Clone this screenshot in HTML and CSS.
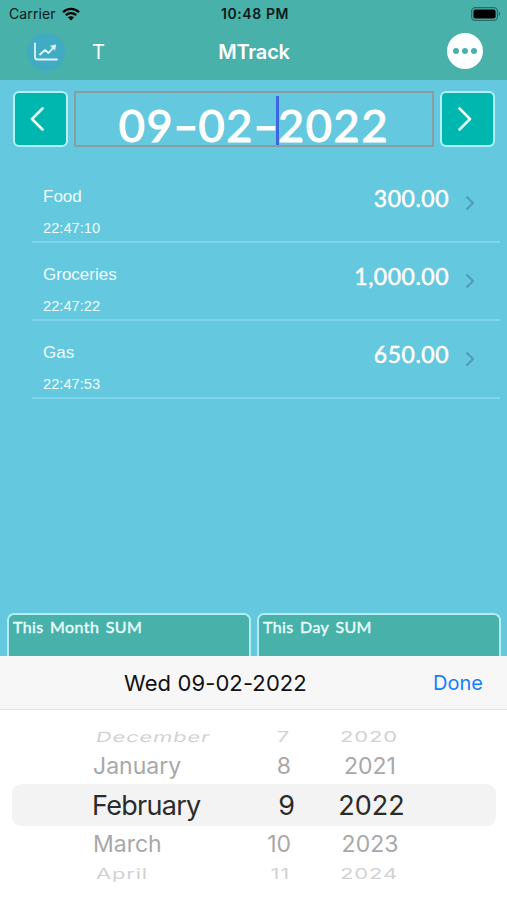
FILE: index.html
```html
<!DOCTYPE html>
<html lang="en">
<head>
  <meta charset="UTF-8" />
  <meta name="viewport" content="width=device-width, initial-scale=1" />
  <title>MTrack</title>
  <link rel="stylesheet" href="styles.css">
</head>
<body>
  <header>
    <div class="status-bar">
      <div class="carrier">
        <span>Carrier</span>
        <svg class="wifi" viewBox="0 0 18 14" width="18" height="14" aria-hidden="true">
          <path d="M1 5.2C5.6.7 12.4.7 17 5.2M3.8 8.2c3-2.900 7.400-2.900 10.400 0" fill="none" stroke="#000" stroke-width="2.300" />
          <path d="M9 13.500 5.900 10.300c1.800-1.500 4.400-1.500 6.200 0z" />
        </svg>
      </div>
      <span class="clock">10:48 PM</span>
      <svg class="battery" viewBox="0 0 30 14" width="30" height="14" aria-hidden="true">
        <rect x=".6" y=".6" width="25.800" height="12.800" rx="3.600" fill="none" stroke="#2c6b66" stroke-width="1.200" />
        <rect x="2.400" y="2.400" width="22.200" height="9.200" rx="2" />
        <path d="M27.600 4.800c1.800.6 1.800 3.800 0 4.400z" fill="#2c6b66" />
      </svg>
    </div>
    <nav class="nav-bar">
      <button class="btn-chart" aria-label="Chart">
        <svg viewBox="0 0 26 20" width="26" height="20" fill="none" stroke="#e2f6fc" stroke-width="1.800" stroke-linecap="round">
          <path d="M2 1.500v13.500q0 2.500 2.500 2.500H24" />
          <path d="m7 12.500 5-4.500 3.500 3L20.500 5.500" stroke-linejoin="round" />
          <path d="m17.800 4 4.900-1.200-.8 5z" fill="#e2f6fc" stroke-width=".6" />
        </svg>
      </button>
      <span class="btn-text">T</span>
      <h1>MTrack</h1>
      <button class="btn-more" aria-label="More"><i></i><i></i><i></i></button>
    </nav>
  </header>

  <main>
    <section class="date-row">
      <button class="btn-arrow prev" aria-label="Previous day">
        <svg viewBox="0 0 14 24" width="14" height="24"><path d="M12.500 1.500 2 12l10.500 10.500" /></svg>
      </button>
      <div class="date-field"><span>09</span><span class="dash">-</span><span>02</span><span class="dash">-</span><i class="caret"></i><span>2022</span></div>
      <button class="btn-arrow next" aria-label="Next day">
        <svg viewBox="0 0 14 24" width="14" height="24"><path d="M1.500 1.500 12 12 1.500 22.500" /></svg>
      </button>
    </section>

    <ul class="entries">
      <li>
        <div class="entry-info"><span class="name">Food</span><span class="time">22:47:10</span></div>
        <span class="amount">300.00</span>
        <svg class="chevron" viewBox="0 0 10 16" width="10" height="16"><path d="m1.500 1.500 6.500 6.500-6.500 6.500" /></svg>
      </li>
      <li>
        <div class="entry-info"><span class="name">Groceries</span><span class="time">22:47:22</span></div>
        <span class="amount">1,000.00</span>
        <svg class="chevron" viewBox="0 0 10 16" width="10" height="16"><path d="m1.500 1.500 6.500 6.500-6.500 6.500" /></svg>
      </li>
      <li>
        <div class="entry-info"><span class="name">Gas</span><span class="time">22:47:53</span></div>
        <span class="amount">650.00</span>
        <svg class="chevron" viewBox="0 0 10 16" width="10" height="16"><path d="m1.500 1.500 6.500 6.500-6.500 6.500" /></svg>
      </li>
    </ul>

    <section class="sums">
      <div class="sum">This Month SUM</div>
      <div class="sum">This Day SUM</div>
    </section>
  </main>

  <!-- Date picker -->
  <div class="toolbar">
    <span class="picked">Wed 09-02-2022</span>
    <button class="btn-done">Done</button>
  </div>
  <div class="picker">
    <div class="wheel far top"><span>December</span><span>7</span><span>2020</span></div>
    <div class="wheel near"><span>January</span><span>8</span><span>2021</span></div>
    <div class="wheel selected"><span>February</span><span>9</span><span>2022</span></div>
    <div class="wheel near"><span>March</span><span>10</span><span>2023</span></div>
    <div class="wheel far"><span>April</span><span>11</span><span>2024</span></div>
  </div>
</body>
</html>
```

FILE: styles.css
```css
* {
  box-sizing: border-box;
}
html, body {
  height: 100%;
  margin: 0;
  overflow: hidden;
}
body {
  display: flex;
  flex-direction: column;
  background: #fff;
  font-family: Inter, "Liberation Sans", sans-serif;
}
button {
  border: none;
  padding: 0;
  font-family: inherit;
}

/* Header */
header {
  height: 80px;
  background: #48b1aa;
}
.status-bar {
  height: 27px;
  padding: 0 6px 0 9px;
  display: grid;
  grid-template-columns: 1fr auto 1fr;
  align-items: center;
  color: #0b1a19;
}
.carrier {
  display: flex;
  align-items: center;
  gap: 6px;
  font-size: 14px;
  letter-spacing: 0.1px;
}
.clock {
  font-size: 14px;
  font-weight: 600;
  letter-spacing: 0.6px;
}
.battery {
  justify-self: end;
}
.nav-bar {
  height: 50px;
  padding: 0 24px 0 27px;
  display: grid;
  grid-template-columns: 38px 1fr auto 1fr 36px;
  align-items: center;
  color: #fff;
}
.btn-chart {
  width: 38px;
  height: 38px;
  border-radius: 50%;
  background: #41abc3;
  display: flex;
  align-items: center;
  justify-content: center;
}
.btn-text {
  padding-left: 27px;
  font-size: 20px;
}
h1 {
  margin: 0 2px 0 -2px;
  font-size: 20px;
  font-weight: 600;
  letter-spacing: -0.2px;
}
.btn-more {
  grid-column: 5;
  width: 36px;
  height: 36px;
  margin-top: -2px;
  border-radius: 50%;
  background: #fff;
  display: flex;
  align-items: center;
  justify-content: center;
  gap: 3px;
}
.btn-more i {
  width: 6px;
  height: 6px;
  border-radius: 50%;
  background: #48b1aa;
}

/* Content */
main {
  height: 576px;
  background: #64c8de;
  display: flex;
  flex-direction: column;
}
.date-row {
  padding: 11px 12px 0 13px;
  display: flex;
  gap: 6px;
  align-items: flex-start;
}
.btn-arrow {
  width: 55px;
  height: 56px;
  border: 2px solid #b5f1f3;
  border-radius: 6px;
  background: #00b7b0;
  display: flex;
  align-items: center;
  justify-content: center;
}
.btn-arrow.prev {
  padding-right: 8px;
}
.btn-arrow.next {
  padding-right: 5px;
}
.btn-arrow path {
  fill: none;
  stroke: #e9fffc;
  stroke-width: 2.6;
  stroke-linecap: round;
  stroke-linejoin: round;
}
.date-field {
  flex: 1;
  height: 56px;
  border: 2px solid #8b9da3;
  display: flex;
  justify-content: center;
  color: #fff;
  font-family: Lato, sans-serif;
  font-size: 45px;
  line-height: 64px;
  letter-spacing: 1.7px;
  -webkit-text-stroke: 1.2px #fff;
  stroke-linejoin: round;
}
.dash {
  width: 24px;
  letter-spacing: 0;
  text-align: center;
  transform: scaleX(1.5);
}
.caret {
  width: 3px;
  height: 49px;
  margin: 3px -1px 0 -2px;
  background: #3b66e0;
}

.entries {
  list-style: none;
  margin: 18px 7px 0 32px;
  padding: 0;
  color: #effcff;
}
.entries li {
  height: 78px;
  padding: 0 25px 0 11px;
  border-bottom: 2px solid #7fd5ea;
  display: flex;
}
.entry-info {
  flex: 1;
  padding-top: 20px;
  display: flex;
  flex-direction: column;
  font-family: "Liberation Sans", sans-serif;
}
.name {
  font-size: 17px;
  line-height: 24px;
}
.time {
  margin-top: 10px;
  font-size: 14.7px;
  line-height: 18px;
}
.amount {
  padding-top: 18px;
  color: #fff;
  font-family: Lato, sans-serif;
  font-size: 23px;
  line-height: 30px;
  letter-spacing: 0.5px;
  -webkit-text-stroke: 0.5px #fff;
  stroke-linejoin: round;
}
.chevron {
  margin: 30px 0 0 16px;
}
.chevron path {
  fill: none;
  stroke: #4e9db3;
  stroke-width: 2;
}

.sums {
  margin-top: auto;
  padding: 0 6px 0 7px;
  display: flex;
  gap: 6px;
}
.sum {
  flex: 1;
  height: 43px;
  padding: 2px 4px;
  border: 2px solid #b4edf0;
  border-bottom: none;
  border-radius: 7px 7px 0 0;
  background: #48b1aa;
  color: #eafffd;
  font-family: Lato, sans-serif;
  font-size: 16px;
  line-height: 20px;
  letter-spacing: 0.4px;
  word-spacing: 2px;
  -webkit-text-stroke: 0.4px #eafffd;
}

/* Toolbar over the picker */
.toolbar {
  height: 54px;
  padding: 0 24px 0 124px;
  border-bottom: 1px solid #e2e2e4;
  background: #f7f7f7;
  display: flex;
  align-items: center;
  justify-content: space-between;
}
.picked {
  font-size: 22px;
  color: #111;
  letter-spacing: 0.1px;
}
.btn-done {
  background: none;
  color: #147efb;
  font-size: 20px;
}

.picker {
  flex: 1;
  padding: 18px 11px 0 12px;
}
.wheel {
  padding-left: 80px;
  display: grid;
  grid-template-columns: 130px 73px 153px;
  align-items: center;
}
.wheel span:nth-child(2) {
  text-align: right;
}
.wheel span:nth-child(3) {
  text-align: center;
}
.far {
  height: 20px;
  padding-left: 84px;
  grid-template-columns: 126px 68px 158px;
  font-size: 22px;
  letter-spacing: 0.8px;
  color: #d2d2d2;
  transform: scaleY(0.64);
}
.far.top {
  margin-top: -3px;
  margin-bottom: 3px;
}
.far.top span:first-child {
  transform: skewX(-8deg);
}
.near {
  height: 36px;
  padding-left: 81px;
  grid-template-columns: 129px 69px 158px;
  font-size: 23px;
  color: #a8a8a8;
}
.selected {
  height: 42px;
  border-radius: 9px;
  background: #f3f3f3;
  color: #2b2b2b;
  font-size: 27px;
}
.selected span:first-child {
  letter-spacing: -0.7px;
}
```
